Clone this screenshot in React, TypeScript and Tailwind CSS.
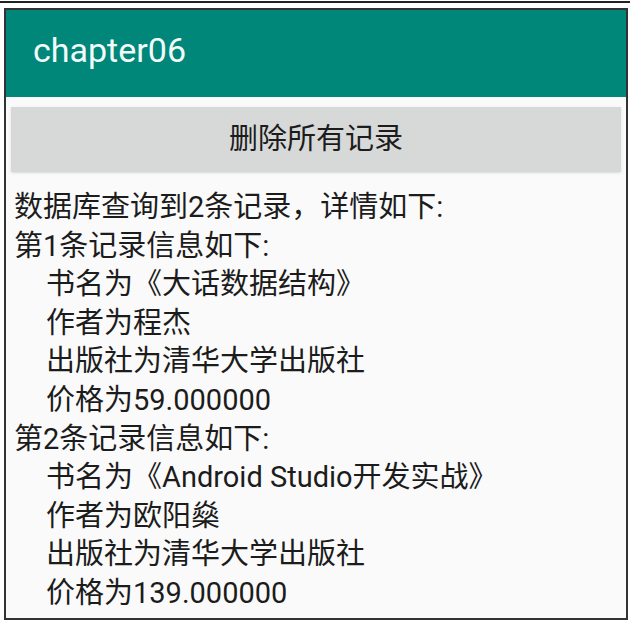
export default function App() {
  const lines: { text: string; indent: boolean }[] = [
    { text: '数据库查询到2条记录，详情如下:', indent: false },
    { text: '第1条记录信息如下:', indent: false },
    { text: '书名为《大话数据结构》', indent: true },
    { text: '作者为程杰', indent: true },
    { text: '出版社为清华大学出版社', indent: true },
    { text: '价格为59.000000', indent: true },
    { text: '第2条记录信息如下:', indent: false },
    { text: '书名为《Android Studio开发实战》', indent: true },
    { text: '作者为欧阳燊', indent: true },
    { text: '出版社为清华大学出版社', indent: true },
    { text: '价格为139.000000', indent: true },
  ]

  return (
    <div
      className="w-[633px] h-[625px] bg-white overflow-hidden"
      style={{ fontFamily: 'Roboto, "Noto Sans CJK SC", sans-serif' }}
    >
      {/* top rule */}
      <div className="pt-[1px]">
        <div className="h-[2px] w-[630px] bg-[#222]" />
      </div>

      {/* phone frame */}
      <div className="mt-[5px] ml-[4px] w-[624px] h-[612px] border-2 border-[#333] bg-[#fafafa] flex flex-col">
        <div className="h-[87px] bg-[#00877a] flex items-center pl-[27px]">
          <span className="text-[34px] text-[#f2fbf9] -mt-[6px]">chapter06</span>
        </div>

        <div className="px-[5px] pt-[10px]">
          <div className="h-[65px] bg-[#d7d8d8] flex items-center justify-center shadow-sm">
            <span className="text-[29px] text-[#1c1c1c]">删除所有记录</span>
          </div>
        </div>

        <div className="pl-[8px] mt-[16px] text-[29px] leading-[38.6px] text-[#1c1c1c]">
          {lines.map((l, i) => (
            <div key={i} className={l.indent ? 'pl-[32px]' : ''}>
              {l.text}
            </div>
          ))}
        </div>
      </div>
    </div>
  )
}
